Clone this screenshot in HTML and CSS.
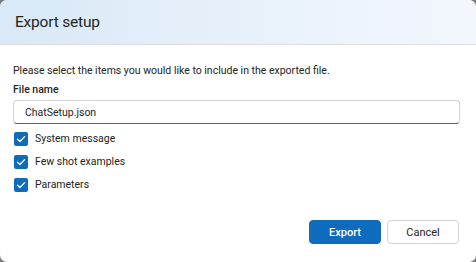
FILE: index.html
```html
<!DOCTYPE html>
<html>
<head>
<meta charset="utf-8">
<link rel="stylesheet" href="styles.css">
</head>
<body>
<div class="dialog">
  <div class="header"><h1 class="title">Export setup</h1></div>
  <div class="body">
    <p class="desc">Please select the items you would like to include in the exported file.</p>
    <label class="field-label">File name</label>
    <div class="input"><span>ChatSetup.json</span></div>
    <div class="checks">
      <div class="check"><span class="box"><svg width="10" height="10" viewBox="0 0 10 10"><path d="M1.5 5.2 L4 7.5 L8.6 2.6" fill="none" stroke="#fff" stroke-width="1.3" stroke-linecap="round" stroke-linejoin="round"/></svg></span><span>System message</span></div>
      <div class="check"><span class="box"><svg width="10" height="10" viewBox="0 0 10 10"><path d="M1.5 5.2 L4 7.5 L8.6 2.6" fill="none" stroke="#fff" stroke-width="1.3" stroke-linecap="round" stroke-linejoin="round"/></svg></span><span>Few shot examples</span></div>
      <div class="check"><span class="box"><svg width="10" height="10" viewBox="0 0 10 10"><path d="M1.5 5.2 L4 7.5 L8.6 2.6" fill="none" stroke="#fff" stroke-width="1.3" stroke-linecap="round" stroke-linejoin="round"/></svg></span><span>Parameters</span></div>
    </div>
    <div class="actions">
      <button class="btn primary">Export</button>
      <button class="btn">Cancel</button>
    </div>
  </div>
</div>
</body>
</html>
```
FILE: styles.css
```css
html, body {
  margin: 0;
  padding: 0;
  background: #7a7a7a;
  width: 476px;
  height: 262px;
  overflow: hidden;
}
.dialog {
  width: 476px;
  height: 262px;
  background: #fff;
  border-radius: 7px;
  overflow: hidden;
  font-family: "Roboto", "Open Sans", sans-serif;
  color: #242424;
  display: flex;
  flex-direction: column;
}
.header {
  height: 45px;
  box-sizing: border-box;
  border-bottom: 1px solid #e0e0e0;
  background: linear-gradient(90deg, #d8e8f6 0%, #e6f0fa 45%, #f3f7fd 100%);
  display: flex;
  align-items: center;
  padding-left: 15px;
}
.title {
  margin: 0;
  font-size: 15.5px;
  letter-spacing: -0.2px;
  font-weight: 400;
  color: #242424;
}
.body {
  padding: 18px 17px 0 13px;
  display: flex;
  flex-direction: column;
  flex: 1;
}
.desc {
  margin: 0;
  font-size: 10.5px;
  line-height: 16px;
  color: #242424;
}
.field-label {
  font-size: 10.5px;
  font-weight: 500;
  line-height: 16px;
  margin-top: 3px;
}
.input {
  margin-top: 2px;
  height: 24px;
  box-sizing: border-box;
  border: 1px solid #d1d1d1;
  border-bottom-color: #616161;
  border-radius: 4px;
  display: flex;
  align-items: center;
  padding-left: 11px;
  font-size: 10.5px;
  width: 447px;
}
.checks {
  margin-top: 7px;
  display: flex;
  flex-direction: column;
  gap: 8px;
}
.check {
  display: flex;
  align-items: center;
  gap: 7px;
  font-size: 10.5px;
  height: 15px;
  padding-left: 1px;
}
.box {
  width: 14px;
  height: 14px;
  border-radius: 2px;
  background: #0f6cbd;
  display: flex;
  align-items: center;
  justify-content: center;
}
.actions {
  margin-top: auto;
  margin-bottom: 18px;
  display: flex;
  justify-content: flex-end;
  gap: 6px;
}
.btn {
  width: 72px;
  height: 24px;
  box-sizing: border-box;
  border-radius: 4px;
  border: 1px solid #d1d1d1;
  background: #fff;
  font-family: "Roboto", "Open Sans", sans-serif;
  font-size: 11px;
  font-weight: 400;
  color: #242424;
  padding: 0;
  flex: none;
}
.btn.primary {
  background: #0f6cbd;
  border-color: #0f6cbd;
  color: #fff;
  font-weight: 500;
}
```
